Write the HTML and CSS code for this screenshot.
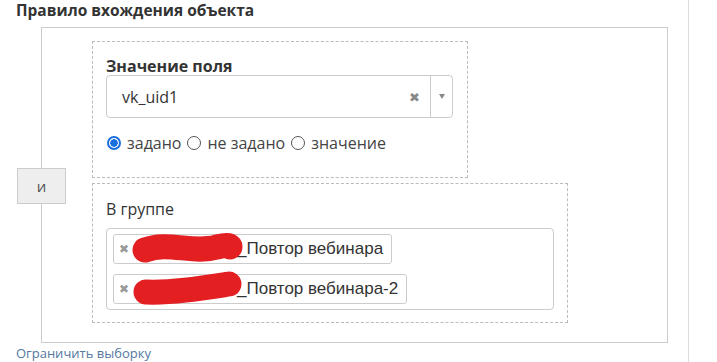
FILE: index.html
```html
<!DOCTYPE html>
<html>
<head>
    <meta charset="UTF-8">
    <title>Правило вхождения объекта</title>
    <link rel="stylesheet" href="styles.css">
</head>
<body>
<div class="page">
    <h3 class="title">Правило вхождения объекта</h3>

    <div class="rule">
        <span class="joinBtn">и</span>
        <div class="conds">
            <!-- значение поля -->
            <div class="cond condField">
                <div class="label bold">Значение поля</div>
                <div class="select">
                    <span class="selVal">vk_uid1</span>
                    <span class="selClear">&#10006;</span>
                    <span class="selArrow"><i></i></span>
                </div>
                <div class="radios">
                    <label><span class="radio checked"></span>задано</label>
                    <label><span class="radio"></span>не задано</label>
                    <label><span class="radio"></span>значение</label>
                </div>
            </div>
            <!-- группа -->
            <div class="cond condGroup">
                <div class="label">В группе</div>
                <div class="multi">
                    <span class="tag">
                        <span class="tagX">&#10006;</span>
                        <svg class="blot" width="110" height="32" viewBox="0 0 110 32">
                            <path d="M12 17 C 35 8, 60 21, 84 14 C 92 12, 97 12, 97 14" fill="none" stroke="#e41f22" stroke-width="25" stroke-linecap="round"/>
                        </svg><span class="tagText">_Повтор вебинара</span>
                    </span>
                    <span class="tag">
                        <span class="tagX">&#10006;</span>
                        <svg class="blot" width="110" height="32" viewBox="0 0 110 32">
                            <path d="M13 19 C 40 20, 70 15, 96 11" fill="none" stroke="#e41f22" stroke-width="25" stroke-linecap="round"/>
                        </svg><span class="tagText">_Повтор вебинара-2</span>
                    </span>
                </div>
            </div>
        </div>
    </div>

    <a class="limit" href="javascript:;">Ограничить выборку</a>
</div>
</body>
</html>
```

FILE: styles.css
```css
* {
    margin: 0;
    padding: 0;
    box-sizing: border-box;
}

body {
    font-family: "Open Sans", "Noto Sans", sans-serif;
    color: #333;
    background: #fff;
}

.page {
    width: 689px;
    height: 362px;
    padding: 0 0 0 16px;
    border-right: 1px solid #ddd;
}

.title {
    font-size: 15.5px;
    font-weight: 700;
    line-height: 19px;
    padding-top: 1px;
    color: #333;
}

/* блок правила */
.rule {
    margin: 7px 20px 0 25px;
    border: 1px solid #ccc;
    display: flex;
    align-items: center;
    padding: 13px 0 19px 0;
    height: 316px;
}

.joinBtn {
    margin-left: -25px;
    margin-top: 7px;
    width: 49px;
    height: 36px;
    line-height: 34px;
    text-align: center;
    background: #eee;
    border: 1px solid #ccc;
    font-size: 15px;
    color: #555;
    flex-shrink: 0;
}

.conds {
    margin-left: 26px;
    display: flex;
    flex-direction: column;
    gap: 5px;
}

.cond {
    border: 1px dashed #bbb;
    padding: 0 13px;
}

.condField {
    width: 376px;
    height: 137px;
    padding-top: 14px;
}

.condGroup {
    width: 476px;
    height: 140px;
    padding-top: 15px;
}

.label {
    font-size: 16px;
    line-height: 20px;
    color: #333;
}

.bold {
    font-weight: 700;
}

.condGroup .label {
    margin-bottom: 9px;
}

/* селект */
.select {
    margin-top: -1px;
    width: 347px;
    height: 43px;
    border: 1px solid #ccc;
    border-radius: 4px;
    display: flex;
    align-items: center;
}

.selVal {
    flex: 1;
    padding-left: 15px;
    font-size: 16px;
    color: #333;
}

.selClear {
    font-size: 13px;
    color: #888;
    padding-right: 10px;
}

.selArrow {
    align-self: stretch;
    width: 22px;
    border-left: 1px solid #ccc;
    display: flex;
    align-items: center;
    justify-content: center;
}

.selArrow i {
    width: 0;
    height: 0;
    border-left: 3px solid transparent;
    border-right: 3px solid transparent;
    border-top: 5px solid #888;
}

/* радио */
.radios {
    margin-top: 15px;
    display: flex;
    font-size: 16px;
    line-height: 20px;
    color: #444;
}

.radios label {
    display: flex;
    align-items: center;
    margin-right: 5px;
}

.radio {
    width: 14px;
    height: 14px;
    border: 1px solid #555;
    border-radius: 50%;
    margin: 0 6px 0 1px;
    background: #fff;
}

.radio.checked {
    border: 2px solid #1a6fe0;
    background: radial-gradient(circle, #1a6fe0 0 3.5px, #fff 4px);
}

/* мультиселект */
.multi {
    width: 448px;
    height: 82px;
    border: 1px solid #ccc;
    border-radius: 4px;
    padding: 5px 6px;
    display: flex;
    flex-direction: column;
    align-items: flex-start;
    gap: 10px;
}

.tag {
    display: flex;
    align-items: center;
    height: 30px;
    border: 1px solid #ccc;
    border-radius: 3px;
    padding: 0 8px 0 5px;
    font-family: "Liberation Sans", Arial, sans-serif;
    font-size: 17px;
    color: #333;
}

.tagX {
    font-size: 12px;
    color: #999;
    margin-right: 7px;
}

.blot {
    margin: -2px -6px -2px -3px;
    overflow: visible;
}

.tagText {
    position: relative;
    z-index: -1;
}

.limit {
    display: block;
    margin-top: 1px;
    font-size: 13px;
    line-height: 18px;
    color: #54789f;
    text-decoration: none;
}
```
